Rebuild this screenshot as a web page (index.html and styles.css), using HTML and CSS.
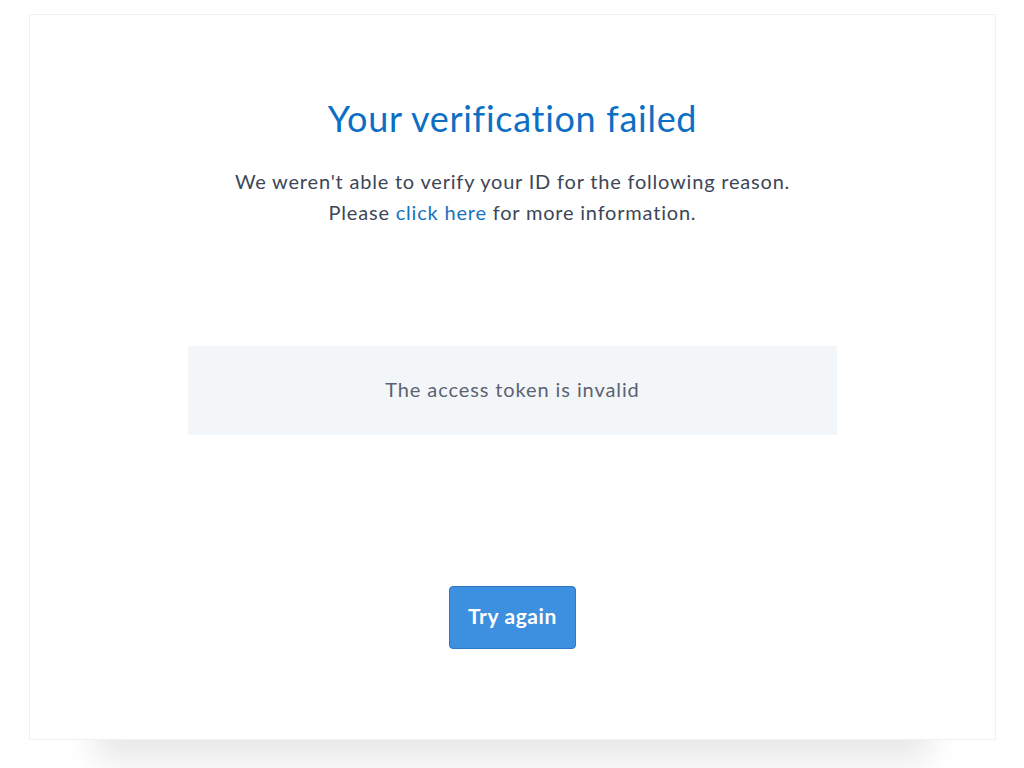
FILE: index.html
```html
<!DOCTYPE html>
<html lang="en">
<head>
    <meta charset="UTF-8">
    <meta name="viewport" content="width=device-width, initial-scale=1.0">
    <title>Verification failed</title>
    <link rel="stylesheet" href="styles.css">
</head>
<body>
    <div class="card">
        <h1 class="title">Your verification failed</h1>
        <p class="intro">
            We weren't able to verify your ID for the following reason.<br>
            Please <a href="#">click here</a> for more information.
        </p>
        <div class="reason">The access token is invalid</div>
        <button type="button" class="retry">Try again</button>
    </div>
</body>
</html>
```

FILE: styles.css
```css
body {
    font-family: Lato, "Open Sans", sans-serif;
    margin: 0;
    padding: 14px 28px 0 29px;
    min-height: 768px;
    box-sizing: border-box;
    background-color: #fff;
    overflow: hidden;
}

.card {
    width: 965px;
    height: 724px;
    border: 1px solid #f1f1f1;
    background-color: #fff;
    box-shadow: 0 88px 30px -66px rgba(0, 0, 0, 0.09);
    display: flex;
    flex-direction: column;
    align-items: center;
}

.title {
    margin: 81px 0 0;
    font-size: 36px;
    line-height: 44px;
    font-weight: 400;
    letter-spacing: 0.7px;
    color: #0d6fc4;
}

.intro {
    margin: 26px 0 0;
    font-size: 20px;
    line-height: 31px;
    letter-spacing: 0.8px;
    color: #3d4656;
    text-align: center;
}

.intro a {
    color: #1672c0;
    text-decoration: none;
}

.reason {
    margin-top: 118px;
    width: 649px;
    height: 89px;
    background-color: #f3f6f9;
    color: #5b6271;
    font-size: 20px;
    letter-spacing: 0.9px;
    display: flex;
    align-items: center;
    justify-content: center;
    padding-bottom: 3px;
    box-sizing: border-box;
}

.retry {
    margin-top: 151px;
    width: 127px;
    height: 63px;
    padding: 0 0 4px;
    background-color: #3d8fe0;
    border: 1px solid #2d78c6;
    border-radius: 4px;
    color: #fff;
    font-family: Lato, sans-serif;
    font-size: 21px;
    font-weight: 700;
    letter-spacing: 0.6px;
    cursor: pointer;
}
```
